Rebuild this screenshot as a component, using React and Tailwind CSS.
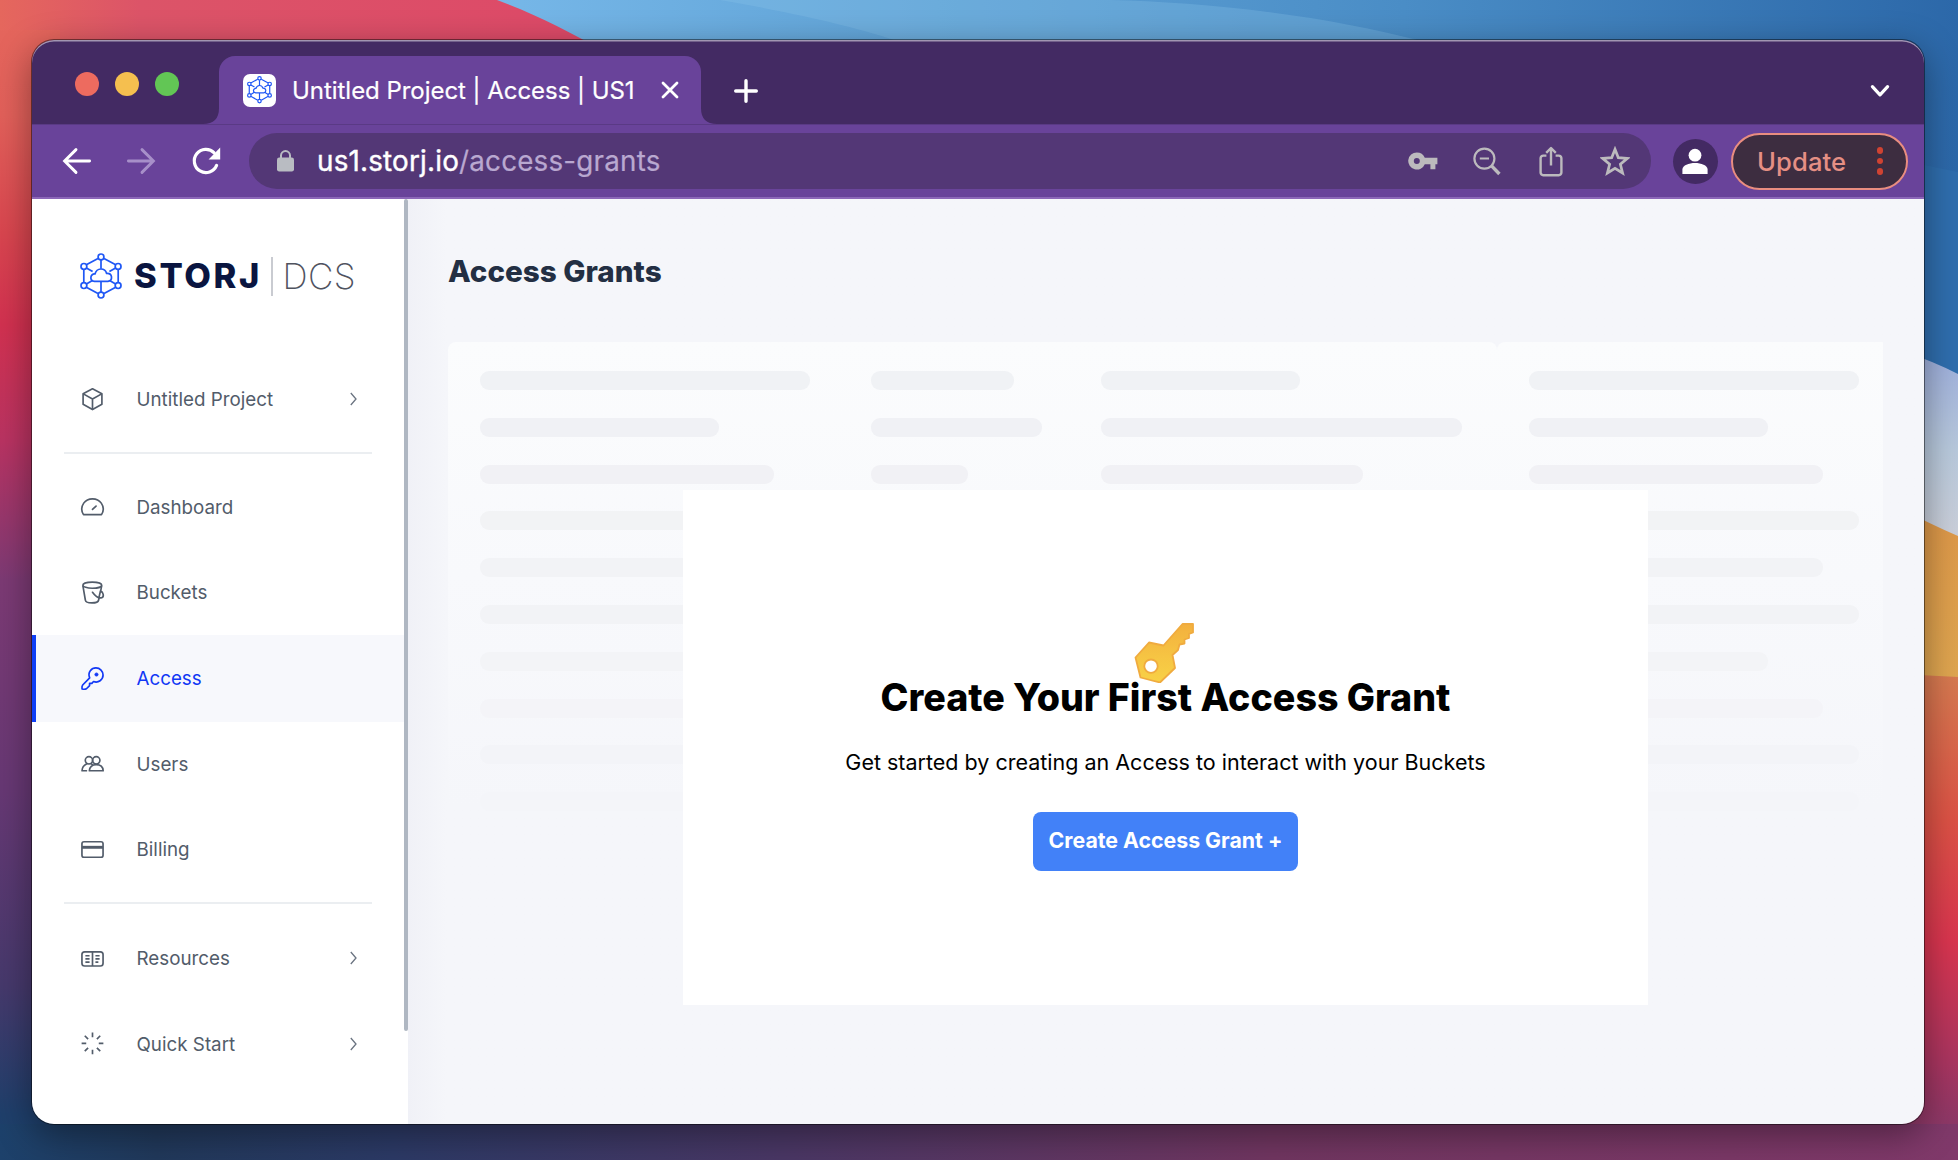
import React from "react";

function Wallpaper() {
  return (
    <svg className="absolute inset-0" width="1958" height="1160" viewBox="0 0 1958 1160" preserveAspectRatio="none" aria-hidden="true">
      <defs>
        <linearGradient id="skyTop" x1="500" y1="0" x2="1958" y2="0" gradientUnits="userSpaceOnUse">
          <stop offset="0" stopColor="#76b7e8" />
          <stop offset="0.3" stopColor="#5fa2d6" />
          <stop offset="0.62" stopColor="#4a8dc6" />
          <stop offset="1" stopColor="#2c68a9" />
        </linearGradient>
        <linearGradient id="redTop" x1="0" y1="0" x2="560" y2="0" gradientUnits="userSpaceOnUse">
          <stop offset="0" stopColor="#e5675d" />
          <stop offset="0.25" stopColor="#dc5468" />
          <stop offset="1" stopColor="#dd4a68" />
        </linearGradient>
        <linearGradient id="leftEdge" x1="0" y1="0" x2="0" y2="1160" gradientUnits="userSpaceOnUse">
          <stop offset="0" stopColor="#e5675d" />
          <stop offset="0.1" stopColor="#e2605a" />
          <stop offset="0.2" stopColor="#d9464f" />
          <stop offset="0.28" stopColor="#d23150" />
          <stop offset="0.38" stopColor="#b93362" />
          <stop offset="0.5" stopColor="#7c3a74" />
          <stop offset="0.68" stopColor="#673874" />
          <stop offset="0.85" stopColor="#46396c" />
          <stop offset="0.96" stopColor="#1f3f6b" />
          <stop offset="1" stopColor="#1d416b" />
        </linearGradient>
        <linearGradient id="lilac" x1="0" y1="360" x2="0" y2="540" gradientUnits="userSpaceOnUse">
          <stop offset="0" stopColor="#9fb0dc" />
          <stop offset="0.5" stopColor="#b8c9dc" />
          <stop offset="1" stopColor="#ccd0da" />
        </linearGradient>
        <linearGradient id="amber" x1="0" y1="520" x2="0" y2="680" gradientUnits="userSpaceOnUse">
          <stop offset="0" stopColor="#dd9849" />
          <stop offset="1" stopColor="#dfa650" />
        </linearGradient>
        <linearGradient id="crimson" x1="0" y1="674" x2="0" y2="1160" gradientUnits="userSpaceOnUse">
          <stop offset="0" stopColor="#d67a50" />
          <stop offset="0.3" stopColor="#dc5245" />
          <stop offset="0.55" stopColor="#d9354f" />
          <stop offset="0.8" stopColor="#a93560" />
          <stop offset="1" stopColor="#7c3a6b" />
        </linearGradient>
        <linearGradient id="bottomEdge" x1="0" y1="0" x2="1958" y2="0" gradientUnits="userSpaceOnUse">
          <stop offset="0" stopColor="#1d416b" />
          <stop offset="0.08" stopColor="#21395b" />
          <stop offset="0.2" stopColor="#2c3a66" />
          <stop offset="0.4" stopColor="#4a3765" />
          <stop offset="0.65" stopColor="#713661" />
          <stop offset="1" stopColor="#80396a" />
        </linearGradient>
      </defs>
      <rect width="1958" height="1160" fill="url(#skyTop)" />
      <path d="M720 0C800 14 860 28 900 42H1425C1320 14 1200 2 1110 0Z" fill="#8cc4ea" opacity="0.28" />
      <path d="M0 0H497C535 14 570 32 602 50H0Z" fill="url(#redTop)" />
      <rect y="30" width="60" height="1130" fill="url(#leftEdge)" />
      <path d="M1900 160L1958 172V380H1900Z" fill="#2f6eae" />
      <path d="M1900 350Q1935 362 1958 374V560H1900Z" fill="url(#lilac)" />
      <path d="M1900 508Q1930 524 1958 536V690H1900Z" fill="url(#amber)" />
      <path d="M1900 674L1958 677V1160H1900Z" fill="url(#crimson)" />
      <rect y="1124" width="1958" height="36" fill="url(#bottomEdge)" />
    </svg>
  );
}

function StorjMark({ size, sw }) {
  return (
    <svg width={size} height={size * 46 / 42} viewBox="0 0 42 46" fill="none" stroke="#1f57f5" strokeWidth={sw} strokeLinejoin="round">
      <path d="M18 5.4L6.3 11.8M24 5.4L35.7 11.8M3.8 16.8V29.2M38.2 16.8V29.2M6.3 34.2L18 40.6M35.7 34.2L24 40.6" />
      <path d="M21 7V15.8M21 28.4V39M6.4 15L12.6 18.6M35.6 15L29.4 18.6M6.4 31L12.4 27.4M35.6 31L29.6 27.4" />
      <path d="M14.5 28.4C8.8 27.5 10.5 20.3 15 21C16.8 14.3 25 14.6 26.6 20.4C32.8 20 33 27.6 28 28.4Z" />
      <circle cx="21" cy="3.9" r="2.9" />
      <circle cx="21" cy="42.1" r="2.9" />
      <circle cx="3.9" cy="13.4" r="2.9" />
      <circle cx="38.1" cy="13.4" r="2.9" />
      <circle cx="3.9" cy="32.6" r="2.9" />
      <circle cx="38.1" cy="32.6" r="2.9" />
    </svg>
  );
}

const icons = {
  project: (
    <>
      <path d="M11 0.8L20 5.4V15.6L11 20.6L2 15.6V5.4Z" />
      <path d="M2.2 5.6L11 10.6L19.8 5.6M11 10.6V20.4" />
    </>
  ),
  dashboard: (
    <path d="M2.4 17.8C0.2 14.4 0.4 10 2.6 6.8C6.4 1.3 15.6 1.3 19.4 6.8C21.6 10 21.8 14.4 19.6 17.8ZM11 12.8L14.4 9.6" strokeLinecap="round" />
  ),
  buckets: (
    <>
      <ellipse cx="10.8" cy="4" rx="9" ry="2.9" />
      <path d="M1.8 4.4L4.2 18.4C4.6 21.8 16.2 21.8 16.8 18.4L17.4 15.8M19.8 4.4L18.8 9.6" />
      <path d="M11 10.8C13.6 14.4 17.2 16.8 19.8 16C22.4 15 21.4 10.4 18.6 9.6L17.2 15.8" strokeLinecap="round" />
    </>
  ),
  access: (
    <>
      <path d="M8.3 10.4C6 4.8 10.2 0.9 14.3 0.9C18.2 0.9 21.1 4 21.1 7.7C21.1 12.2 16.6 15.6 12 13.9L10.4 15.6H8.2V17.8L5.2 20.8C4 21.4 1.8 21.2 1 21C0.8 19.6 0.8 18.2 1.6 17.2Z" />
      <circle cx="14.8" cy="7.2" r="1.5" fill="currentColor" strokeWidth="0.8" />
    </>
  ),
  users: (
    <>
      <circle cx="7.6" cy="7" r="3.5" />
      <circle cx="14.6" cy="7" r="3.5" />
      <path d="M5.6 10.2C2.6 11.6 1 13.8 1 17H5.2" strokeLinecap="round" />
      <path d="M8 17C8 13.6 10.6 11.2 14.6 11.2C18.6 11.2 21 13.6 21.2 17Z" />
      <path d="M9.6 10.2L11.4 11.6" />
    </>
  ),
  billing: (
    <>
      <rect x="0.9" y="3.6" width="20.2" height="14.8" rx="2" />
      <path d="M1 8.9H21" strokeWidth="2.8" />
    </>
  ),
  resources: (
    <>
      <rect x="0.9" y="4.6" width="20.2" height="13.6" rx="2.6" />
      <path d="M11 4.6V18.2M4.2 8.4H8.2M4.2 11.4H8.2M4.2 14.4H8.2M13.8 8.4H17.8M13.8 11.4H17.8M13.8 14.4H16.6" />
    </>
  ),
  quick: (
    <path d="M11 -0.4V4M11 16V20.4M0.6 10H5M17 10H21.4M3.6 2.6L6.8 5.8M18.4 2.6L15.2 5.8M3.6 17.4L6.8 14.2M18.4 17.4L15.2 14.2" />
  ),
};

function NavItem({ icon, label, arrow, active, height }) {
  return (
    <a className={`flex items-center pr-[46px] ${height} ${active ? "border-l-4 border-[#0f3ff5] bg-[#f7f8fc] pl-[45px] text-[#1238f5]" : "pl-[49px] text-[#525c6a]"}`}>
      <svg className="shrink-0 overflow-visible" width="23" height="23" viewBox="0 0 22 22" fill="none" stroke="currentColor" strokeWidth="1.6" strokeLinejoin="round">
        {icons[icon]}
      </svg>
      <span className="ml-[32.5px] grow pt-px text-[18.8px] leading-6 whitespace-nowrap">{label}</span>
      {arrow && (
        <svg width="9" height="14" viewBox="0 0 9 14" fill="none" stroke="#6a7380" strokeWidth="1.3">
          <path d="M1.8 1L7 7L1.8 13" />
        </svg>
      )}
    </a>
  );
}

function Sidebar() {
  return (
    <aside className="flex w-[376px] shrink-0 bg-white">
      <div className="flex w-[372px] flex-col">
        <div className="flex h-[154px] items-center pl-[48px]">
          <StorjMark size={42} sw={1.7} />
          <span className="ml-[12px] w-[124px] text-[34.5px] leading-none font-extrabold tracking-[2.6px] whitespace-nowrap text-[#0a1540]">STORJ</span>
          <span className="ml-[13px] h-[39px] w-[1.5px] bg-[#c9cbd1]" />
          <span className="ml-[10px] text-[35px] leading-none font-extralight tracking-[0.4px] text-[#50535f]">DCS</span>
        </div>
        <div className="mt-[3px]">
          <NavItem icon="project" label="Untitled Project" arrow height="h-[86px]" />
        </div>
        <div className="mx-8 mt-[10px] h-[2px] bg-[#ebeef1]" />
        <nav className="mt-[11px] flex flex-col">
          <NavItem icon="dashboard" label="Dashboard" height="h-[85px]" />
          <NavItem icon="buckets" label="Buckets" height="h-[85px]" />
          <NavItem icon="access" label="Access" active height="h-[87px]" />
          <NavItem icon="users" label="Users" height="h-[85px]" />
          <NavItem icon="billing" label="Billing" height="h-[85px]" />
        </nav>
        <div className="mx-8 mt-[10px] h-[2px] bg-[#ebeef1]" />
        <nav className="mt-[11px] flex flex-col">
          <NavItem icon="resources" label="Resources" arrow height="h-[86px]" />
          <NavItem icon="quick" label="Quick Start" arrow height="h-[86px]" />
        </nav>
      </div>
      <div className="h-[832px] w-1 rounded-full bg-[#afb7c2]" />
    </aside>
  );
}

function TabStrip() {
  return (
    <div className="flex h-[84px] items-end bg-[#432a63]">
      <div className="mb-[28.5px] ml-[43px] flex gap-4">
        <span className="size-6 rounded-full bg-[#ed6b5f]" />
        <span className="size-6 rounded-full bg-[#f5bf4f]" />
        <span className="size-6 rounded-full bg-[#62c655]" />
      </div>
      <svg className="ml-[24px]" width="16" height="16" viewBox="0 0 16 16">
        <path d="M16 0V16H0Q16 16 16 0Z" fill="#69439a" />
      </svg>
      <div className="flex h-[68px] w-[482px] items-center rounded-t-[16px] bg-[#69439a] pl-6">
        <span className="flex size-[33px] items-center justify-center rounded-[7px] bg-white">
          <StorjMark size={25} sw={2} />
        </span>
        <span className="ml-[16px] w-[345px] pt-px text-[24px] tracking-[-0.04px] whitespace-nowrap text-white [-webkit-text-stroke:0.2px_white]">Untitled Project | Access | US1</span>
        <svg className="ml-[23.5px]" width="18" height="18" viewBox="0 0 18 18" stroke="white" strokeWidth="2.8" strokeLinecap="round">
          <path d="M2 2L16 16M16 2L2 16" />
        </svg>
      </div>
      <svg width="16" height="16" viewBox="0 0 16 16">
        <path d="M0 0V16H16Q0 16 0 0Z" fill="#69439a" />
      </svg>
      <svg className="mb-[21.5px] ml-[17px]" width="24" height="24" viewBox="0 0 24 24" stroke="white" strokeWidth="3.4" strokeLinecap="round">
        <path d="M12 1.7V22.3M1.7 12H22.3" />
      </svg>
      <svg className="mr-[34.5px] mb-[25px] ml-auto" width="20" height="16" viewBox="0 0 20 16" fill="none" stroke="white" strokeWidth="3.2" strokeLinecap="round" strokeLinejoin="round">
        <path d="M2.4 3.6L10 11.8L17.6 3.6" />
      </svg>
    </div>
  );
}

function Toolbar() {
  return (
    <div className="flex h-[75px] items-center border-t border-b-2 border-t-[#5a3a85] border-b-[#8c67b8] bg-[#69439a]">
      <svg className="ml-[29.5px]" width="30" height="28" viewBox="0 0 30 28" fill="none" stroke="white" strokeWidth="2.9" strokeLinecap="round">
        <path d="M27.6 14H3M14 2.6L2.6 14L14 25.4" />
      </svg>
      <svg className="ml-[34px]" width="30" height="28" viewBox="0 0 30 28" fill="none" stroke="#a78fc9" strokeWidth="2.9" strokeLinecap="round">
        <path d="M2.4 14H27M16 2.6L27.4 14L16 25.4" />
      </svg>
      <svg className="ml-[35px]" width="30" height="30" viewBox="0 0 30 30" fill="none">
        <path d="M25.6 19.4A11.6 11.6 0 1 1 23.2 6.8" stroke="white" strokeWidth="3.2" strokeLinecap="round" />
        <path d="M29.2 1.6V13.4H17.6Z" fill="white" />
      </svg>
      <div className="ml-[28.5px] flex h-[56px] w-[1402px] shrink-0 items-center rounded-full bg-[#533776] pl-7">
        <svg width="17" height="22" viewBox="0 0 17 22">
          <path d="M4 9V5.6A4.5 4.5 0 0 1 13 5.6V9" fill="none" stroke="#b9bcc2" strokeWidth="2" />
          <rect y="7.6" width="17" height="13.8" rx="2.2" fill="#b9bcc2" />
        </svg>
        <span className="ml-[23px] pt-px text-[27.8px] leading-none tracking-[0.2px] whitespace-nowrap text-[#b9a8d0] [-webkit-text-stroke:0.2px_#b9a8d0]">
          <span className="text-white [-webkit-text-stroke:0.4px_white]">us1.storj.io</span>/access-grants
        </span>
        <svg className="ml-auto" width="30" height="18" viewBox="0 0 30 18" fill="#bcbabd">
          <path fillRule="evenodd" d="M8.8 0.4A8.6 8.6 0 1 0 16.8 12.2H22.4V17.2H27.4V12.2H29.4V5.8H16.8A8.6 8.6 0 0 0 8.8 0.4ZM8.8 6A3 3 0 1 1 8.8 12A3 3 0 0 1 8.8 6Z" />
        </svg>
        <svg className="ml-[35px]" width="28" height="29" viewBox="0 0 28 29" fill="none" stroke="#bcbabd">
          <circle cx="11.4" cy="11.6" r="10" strokeWidth="2.2" />
          <path d="M6.8 11.6H16" strokeWidth="2" />
          <path d="M18.6 18.8L26.4 27" strokeWidth="3.4" />
        </svg>
        <svg className="ml-[38px]" width="24" height="31" viewBox="0 0 24 31" fill="none" stroke="#bcbabd" strokeWidth="2.4" strokeLinejoin="round">
          <path d="M7.4 9.6H4.2A2.6 2.6 0 0 0 1.6 12.2V26.6A2.6 2.6 0 0 0 4.2 29.2H19.8A2.6 2.6 0 0 0 22.4 26.6V12.2A2.6 2.6 0 0 0 19.8 9.6H16.6" />
          <path d="M12 19.6V2.4M7.2 6.8L12 2L16.8 6.8" />
        </svg>
        <svg className="mr-[21.5px] ml-[37px]" width="30" height="30" viewBox="0 0 30 30" fill="none" stroke="#bcbabd" strokeWidth="2.5">
          <path d="M15 3.6L18 11.2L26.2 11.8L19.9 17.1L21.9 25.1L15 20.8L8.1 25.1L10.1 17.1L3.8 11.8L12 11.2Z" transform="translate(-1.5 -0.6) scale(1.1)" />
        </svg>
      </div>
      <span className="ml-[21.5px] flex size-[45px] shrink-0 items-center justify-center rounded-full bg-[#432a63]">
        <svg width="26" height="27" viewBox="0 0 26 27" fill="white">
          <circle cx="13" cy="7.2" r="6.4" />
          <path d="M0.4 26V21.4C0.4 17.4 7 15 13 15S25.6 17.4 25.6 21.4V26Z" />
        </svg>
      </span>
      <div className="ml-[13.5px] flex h-[57px] w-[177px] shrink-0 items-center rounded-full border-2 border-[#e98d80] bg-[#3d2d40] pl-[24px]">
        <span className="pt-px text-[25.6px] leading-none font-medium tracking-[0.1px] text-[#e58f84]">Update</span>
        <span className="mr-[23px] ml-auto flex flex-col gap-[4px]">
          <i className="size-[6.5px] rounded-full bg-[#cf4332]" />
          <i className="size-[6.5px] rounded-full bg-[#cf4332]" />
          <i className="size-[6.5px] rounded-full bg-[#cf4332]" />
        </span>
      </div>
    </div>
  );
}

const leftColumns = [
  { box: "w-[390.5px]", bars: ["w-[330px]", "w-[239px]", "w-[294px]", "w-[330px]", "w-[294px]", "w-[330px]", "w-[239px]", "w-[294px]", "w-[330px]", "w-[330px]"] },
  { box: "w-[230.5px]", bars: ["w-[143px]", "w-[171px]", "w-[97px]"] },
  { box: "w-[361px]", bars: ["w-[199px]", "w-[361px]", "w-[262px]"] },
];

const rightColumn = { box: "w-[330px]", bars: leftColumns[0].bars };

const barTones = ["bg-[#f0f2f5]", "bg-[#f0f1f5]", "bg-[#f1f1f5]", "bg-[#f2f3f5]", "bg-[#f2f3f6]", "bg-[#f2f3f6]", "bg-[#f3f4f7]", "bg-[#f4f4f8]", "bg-[#f3f4f8]", "bg-[#f4f5f9]"];

function SkeletonColumn({ box, bars }) {
  return (
    <div className={`flex shrink-0 flex-col gap-[27.8px] ${box}`}>
      {bars.map((w, r) => (
        <span key={r} className={`h-[19px] shrink-0 rounded-[9px] ${w} ${barTones[r]}`} />
      ))}
    </div>
  );
}

function Content() {
  return (
    <main className="flex grow flex-col bg-linear-to-r from-[#f0f1f7] to-[#f5f6fa] to-[38px] pl-10">
      <h1 className="mt-[51.5px] text-[29.6px] leading-10 font-extrabold text-[#232f43]">Access Grants</h1>
      <section className="relative mt-[51.5px] flex h-[467px] w-[1435px]">
        <div className="flex w-[1048.5px] rounded-t-lg bg-linear-to-b from-[#fbfcfd] via-[#f8f9fc] to-[#f5f6fa] pt-[29px] pl-[32px]">
          {leftColumns.map((col) => (
            <SkeletonColumn key={col.box} {...col} />
          ))}
        </div>
        <div className="flex grow rounded-tl-lg bg-linear-to-b from-[#fbfcfd] via-[#f8f9fc] to-[#f5f6fa] pt-[29px] pl-[32px]">
          <SkeletonColumn {...rightColumn} />
        </div>
        <div className="absolute top-[148px] left-[235px] flex h-[515px] w-[965px] flex-col items-center bg-white pt-[133px]">
          <svg className="mr-[3px]" width="60" height="60" viewBox="0 0 60 60">
            <defs>
              <linearGradient id="gold" x1="0" y1="0" x2="0" y2="1">
                <stop offset="0" stopColor="#f3b03e" />
                <stop offset="0.55" stopColor="#f6c443" />
                <stop offset="1" stopColor="#f8d146" />
              </linearGradient>
            </defs>
            <path fillRule="evenodd" d="M48.5 1H59V9.5L55 11V15L50.5 16.5V20.5L45.5 21.5L44 27L38.5 32L41 45L26 59.5L6.5 54.5L1.5 34.5L15 19.5L29.5 22.5ZM17 36.5A6.7 6.7 0 1 0 17 49.9A6.7 6.7 0 1 0 17 36.5Z" fill="url(#gold)" stroke="#f0ab3f" strokeWidth="1.8" strokeLinejoin="round" />
          </svg>
          <h2 className="mt-[-9px] text-[37.6px] leading-[48px] font-extrabold whitespace-nowrap text-black">Create Your First Access Grant</h2>
          <p className="mt-[24px] text-[21.5px] leading-8 whitespace-nowrap text-black">Get started by creating an Access to interact with your Buckets</p>
          <button className="mt-[34px] h-[59px] w-[265px] rounded-lg bg-[#4281f8] pb-px text-[21.3px] font-bold whitespace-nowrap text-white">Create Access Grant +</button>
        </div>
      </section>
    </main>
  );
}

export default function App() {
  return (
    <div className="relative h-[1160px] w-[1958px] overflow-hidden bg-[#2c3a66] pt-10 pl-8 font-['Inter',sans-serif]">
      <Wallpaper />
      <div className="relative flex h-[1084px] w-[1892px] flex-col overflow-hidden rounded-[22px] shadow-[0_0_0_1px_rgba(0,0,0,0.45),0_10px_36px_rgba(0,0,0,0.4)]">
        <TabStrip />
        <Toolbar />
        <div className="flex min-h-0 grow">
          <Sidebar />
          <Content />
        </div>
        <div className="pointer-events-none absolute inset-0 rounded-[22px] shadow-[inset_0_1.5px_0_rgba(255,255,255,0.5)]" />
      </div>
    </div>
  );
}
